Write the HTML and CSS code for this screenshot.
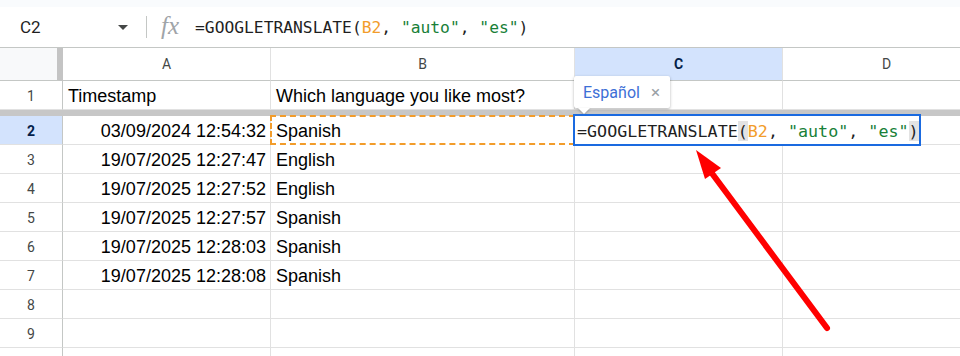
FILE: index.html
```html
<!DOCTYPE html>
<html lang="en">
<head>
  <meta charset="UTF-8">
  <title>GOOGLETRANSLATE - Sheet</title>
  <link rel="stylesheet" href="styles.css">
</head>
<body>

<div class="top-strip"></div>

<div class="formula-bar">
  <div class="name-box">
    <span class="name">C2</span>
    <span class="caret"></span>
  </div>
  <div class="divider"></div>
  <span class="fx">fx</span>
  <div class="formula">=GOOGLETRANSLATE(<span class="ref">B2</span>, <span class="str">"auto"</span>, <span class="str">"es"</span>)</div>
</div>

<div class="sheet">
  <div class="row head-row">
    <div class="cell corner"></div>
    <div class="cell col-head">A</div>
    <div class="cell col-head">B</div>
    <div class="cell col-head active">C</div>
    <div class="cell col-head">D</div>
  </div>

  <div class="row">
    <div class="cell rh">1</div>
    <div class="cell">Timestamp</div>
    <div class="cell">Which language you like most?</div>
    <div class="cell"></div>
    <div class="cell"></div>
  </div>

  <div class="freeze-bar"></div>

  <div class="row">
    <div class="cell rh active">2</div>
    <div class="cell num">03/09/2024 12:54:32</div>
    <div class="cell copied">Spanish</div>
    <div class="cell"></div>
    <div class="cell"></div>
  </div>
  <div class="row">
    <div class="cell rh">3</div>
    <div class="cell num">19/07/2025 12:27:47</div>
    <div class="cell">English</div>
    <div class="cell"></div>
    <div class="cell"></div>
  </div>
  <div class="row">
    <div class="cell rh">4</div>
    <div class="cell num">19/07/2025 12:27:52</div>
    <div class="cell">English</div>
    <div class="cell"></div>
    <div class="cell"></div>
  </div>
  <div class="row">
    <div class="cell rh">5</div>
    <div class="cell num">19/07/2025 12:27:57</div>
    <div class="cell">Spanish</div>
    <div class="cell"></div>
    <div class="cell"></div>
  </div>
  <div class="row">
    <div class="cell rh">6</div>
    <div class="cell num">19/07/2025 12:28:03</div>
    <div class="cell">Spanish</div>
    <div class="cell"></div>
    <div class="cell"></div>
  </div>
  <div class="row">
    <div class="cell rh">7</div>
    <div class="cell num">19/07/2025 12:28:08</div>
    <div class="cell">Spanish</div>
    <div class="cell"></div>
    <div class="cell"></div>
  </div>
  <div class="row">
    <div class="cell rh">8</div>
    <div class="cell"></div>
    <div class="cell"></div>
    <div class="cell"></div>
    <div class="cell"></div>
  </div>
  <div class="row">
    <div class="cell rh">9</div>
    <div class="cell"></div>
    <div class="cell"></div>
    <div class="cell"></div>
    <div class="cell"></div>
  </div>
  <div class="row">
    <div class="cell rh"></div>
    <div class="cell"></div>
    <div class="cell"></div>
    <div class="cell"></div>
    <div class="cell"></div>
  </div>

  <!-- language hint over C1 -->
  <div class="lang-tip">
    <span class="lang">Español</span>
    <span class="close">×</span>
  </div>

  <!-- in-cell editor for C2 -->
  <div class="editor">=GOOGLETRANSLATE<span class="paren">(</span><span class="ref">B2</span>, <span class="str">"auto"</span>, <span class="str">"es"</span><span class="paren">)</span></div>
</div>

<svg class="arrow" width="960" height="356" viewBox="0 0 960 356">
  <line x1="827" y1="328" x2="708" y2="168" stroke="#ff0000" stroke-width="6" stroke-linecap="round"/>
  <polygon points="696,150 705,179 721,168" fill="#ff0000"/>
</svg>

</body>
</html>
```

FILE: styles.css
```css
* { margin: 0; padding: 0; box-sizing: border-box; }
body {
  font-family: 'Liberation Sans', Arial, sans-serif;
  color: #000;
  background: #fff;
  width: 960px;
  height: 356px;
  overflow: hidden;
  position: relative;
}

.top-strip {
  height: 7px;
  background: #f9fbfd;
}

.formula-bar {
  height: 41px;
  display: flex;
  align-items: center;
  border-bottom: 1px solid #c4c7c5;
  background: #fff;
}

.name-box {
  width: 136px;
  display: flex;
  align-items: center;
  padding-left: 20px;
}
.name {
  font-family: Roboto, sans-serif;
  font-size: 17px;
  color: #1f1f1f;
  flex: 1;
}
.caret {
  width: 0;
  height: 0;
  border-left: 5px solid transparent;
  border-right: 5px solid transparent;
  border-top: 5px solid #444746;
  margin-right: 8px;
}

.divider {
  width: 1px;
  height: 22px;
  background: #c4c7c5;
  margin: 0 14px 0 10px;
}

.fx {
  font-family: 'Liberation Serif', serif;
  font-style: italic;
  font-size: 25px;
  color: #a0a4a8;
  margin-right: 16px;
  margin-top: -3px;
}

.formula {
  font-family: 'DejaVu Sans Mono', monospace;
  font-size: 16.3px;
  color: #1f1f1f;
  white-space: nowrap;
}

.ref { color: #f29c2b; }
.str { color: #188038; }

.sheet {
  position: relative;
  height: 308px;
  overflow: hidden;
}

.row {
  display: grid;
  grid-template-columns: 63px 208px 304px 208px 208px;
  height: 29px;
}

.cell {
  border-right: 1px solid #e1e1e1;
  border-bottom: 1px solid #e1e1e1;
  font-size: 18px;
  padding: 2px 5px 0;
  display: flex;
  align-items: center;
  white-space: nowrap;
  overflow: visible;
}

.head-row { height: 33px; }
.head-row .cell { border-bottom-color: #c4c7c5; padding-top: 0; }

.corner {
  background: #f8f9fa;
  border-right: 6px solid #c4c4c4;
}

.col-head {
  justify-content: center;
  font-family: Roboto, sans-serif;
  font-size: 14px;
  color: #444746;
}
.col-head.active {
  background: #d3e3fd;
  color: #041e49;
  font-weight: bold;
}

.rh {
  justify-content: center;
  font-family: Roboto, sans-serif;
  font-size: 14px;
  color: #444746;
  border-right-color: #c4c7c5;
}
.rh.active {
  background: #d3e3fd;
  color: #041e49;
  font-weight: bold;
}

.num { justify-content: flex-end; padding-right: 4px; }

.copied {
  border: 2px dashed #f29c2b;
  margin: -1px 0 0 -1px;
  padding-left: 4px;
}

.freeze-bar {
  height: 6px;
  background: #c7c7c7;
}

.lang-tip {
  position: absolute;
  left: 574px;
  top: 28px;
  width: 96px;
  height: 32px;
  background: #fff;
  border-radius: 2px;
  box-shadow: 0 1px 3px rgba(0, 0, 0, 0.3);
  display: flex;
  align-items: center;
  padding-left: 9px;
  font-family: Roboto, sans-serif;
}
.lang-tip::after {
  content: "";
  position: absolute;
  left: 4px;
  bottom: -6px;
  border-left: 6px solid transparent;
  border-right: 6px solid transparent;
  border-top: 6px solid #fff;
  filter: drop-shadow(0 1px 1px rgba(0, 0, 0, 0.25));
}
.lang {
  font-size: 16px;
  color: #3d6fd6;
  flex: 1;
}
.close {
  font-size: 17px;
  color: #9aa0a6;
  margin-right: 10px;
}

.editor {
  position: absolute;
  left: 573px;
  top: 66px;
  width: 348px;
  height: 32px;
  border: 2px solid #1a6ae0;
  background: #fff;
  padding: 1px 0 0 2px;
  display: flex;
  align-items: center;
  font-family: 'DejaVu Sans Mono', monospace;
  font-size: 16.7px;
  color: #1f1f1f;
  white-space: pre;
}
.paren { background: #e3e3e3; }

.arrow {
  position: absolute;
  top: 0;
  left: 0;
  pointer-events: none;
}
```
